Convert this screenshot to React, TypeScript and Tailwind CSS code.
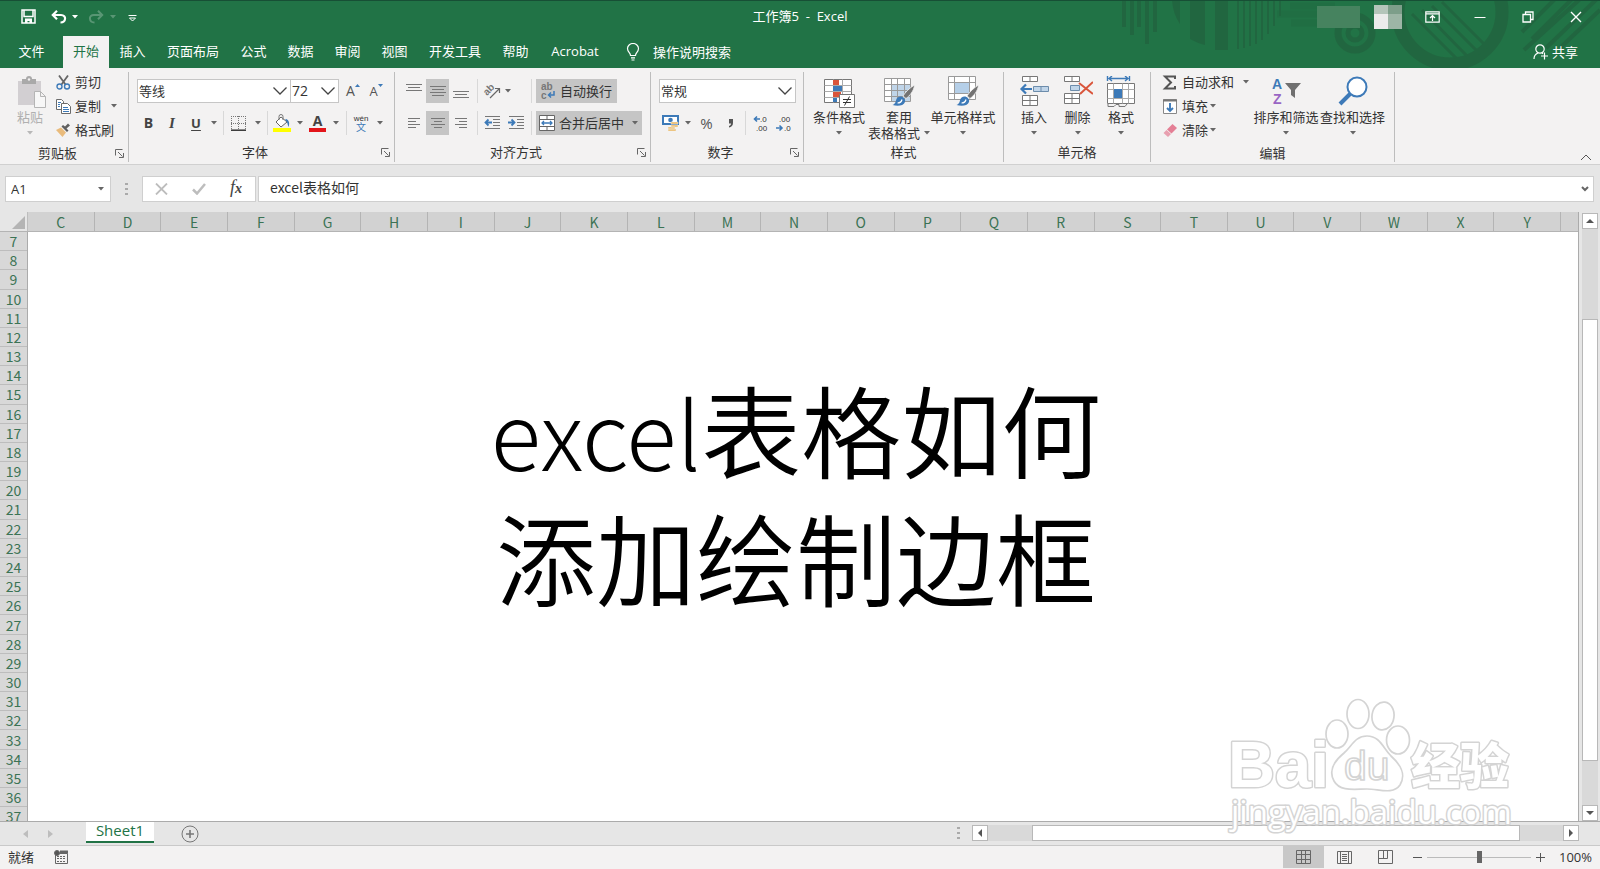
import type { ReactNode } from "react"

const tabs = [
  { name: "插入", width: "w-[47px]" },
  { name: "页面布局", width: "w-[74px]" },
  { name: "公式", width: "w-[47px]" },
  { name: "数据", width: "w-[47px]" },
  { name: "审阅", width: "w-[47px]" },
  { name: "视图", width: "w-[47px]" },
  { name: "开发工具", width: "w-[74px]" },
  { name: "帮助", width: "w-[47px]" },
  { name: "Acrobat", width: "w-[72px]" },
]

const columns = "CDEFGHIJKLMNOPQRSTUVWXY".split("")
const rows = Array.from({ length: 30 }, (_, i) => i + 7)

function Caret({ className = "text-[#666]" }: { className?: string }) {
  return (
    <svg width="6" height="4" viewBox="0 0 6 4" className={`shrink-0 ${className}`} fill="currentColor">
      <path d="M0 0h6L3 3.4z" />
    </svg>
  )
}

function Chevron() {
  return (
    <svg width="16" height="10" viewBox="0 0 16 10" className="pointer-events-none mr-[2px] shrink-0" fill="none" stroke="#444" strokeWidth="1.3">
      <path d="M1.5 1.5 8 8l6.500-6.500" />
    </svg>
  )
}

function Divider() {
  return <span className="h-6 w-px shrink-0 bg-[#d8d8d8]" />
}

interface IconButtonProps {
  label: string
  width: string
  active?: boolean
  children: ReactNode
}

function IconButton({ label, width, active, children }: IconButtonProps) {
  return (
    <button aria-label={label} className={`flex h-6 shrink-0 items-center justify-center ${width} ${active ? "bg-[#c5c5c5]" : ""}`}>
      {children}
    </button>
  )
}

interface GroupProps {
  label: string
  width: string
  launcher?: boolean
  children: ReactNode
}

function Group({ label, width, launcher, children }: GroupProps) {
  return (
    <section aria-label={label} className={`flex h-[90px] shrink-0 flex-col border-r border-[#bdbdbd] ${width}`}>
      <div className="h-[74px]">{children}</div>
      <div className="flex h-5 items-center">
        <span className="flex-1 text-center">{label}</span>
        {launcher && (
          <button aria-label={`${label}设置`} className="w-[13px]">
            <svg width="9" height="9" viewBox="0 0 9 9" fill="none" stroke="#666">
              <path d="M.5 6.500V.5h7M3 3l4.500 4.500M8.500 4v4.500H4" />
            </svg>
          </button>
        )}
      </div>
    </section>
  )
}

interface BigButtonProps {
  label: string
  second?: string
  width: string
  disabled?: boolean
  children: ReactNode
}

function BigButton({ label, second, width, disabled, children }: BigButtonProps) {
  return (
    <button disabled={disabled} className={`flex shrink-0 flex-col items-center pt-1 whitespace-nowrap disabled:text-[#b0b0b0] ${width}`}>
      {children}
      <span className="leading-[18px]">{label}</span>
      <span className="flex h-[14px] items-center gap-1 leading-[14px]">
        {second}
        <Caret className={disabled ? "text-[#b8b8b8]" : "text-[#666]"} />
      </span>
    </button>
  )
}

function SmallButton({ label, caret, children }: { label: string; caret?: string; children: ReactNode }) {
  return (
    <button className="flex h-6 items-center gap-1 pb-1 whitespace-nowrap">
      {children}
      <span>{label}</span>
      {caret && <span className={caret}><Caret /></span>}
    </button>
  )
}

function Lines({ d }: { d: string }) {
  return (
    <svg width="16" height="16" viewBox="0 0 16 16" fill="none" stroke="#777" shapeRendering="crispEdges">
      <path d={d} />
    </svg>
  )
}

function Brush() {
  return (
    <g>
      <path d="M31.500 9c-5 3-9 7-11.500 11l3 2.500C26.500 20 31 15 31.500 9z" fill="#737373" stroke="#f3f2f2" strokeWidth=".8" />
      <path d="M18.500 20.500c-2.500-.5-5 1-5.500 4-.5 2.500-2 4-3.500 4.500 5 1.500 11 1 12.500-3 .7-2-.5-4.500-3.500-5.500z" fill="#3d7ab8" />
      <path d="M14.500 27c2 0 4-1.200 4.500-3.500" stroke="#fff" strokeWidth="1.200" fill="none" />
    </g>
  )
}

function TitleArt() {
  return (
    <svg width="480" height="68" viewBox="0 0 480 68" className="pointer-events-none absolute top-0 right-0 opacity-80" fill="none" stroke="#21643f" aria-hidden="true">
      <path d="M4 0v27M12 0v35M19 0v27M27 0v44M35 0v32" strokeWidth="4" />
      <path d="M52 0h8v24Q53 14 52 0zM70 0h15v45q-8-2-15-6zM95 0h13v50H95z" fill="#21643f" stroke="none" />
      <path d="M118 0v49M124 0v48M130 0v46M136 0v44M142 0v40M148 0v34M154 0v26M160 0v16" strokeWidth="2" />
      <path d="M157 14h60M170 6h45M171 23h46" strokeWidth="7" opacity=".4" />
      <circle cx="235" cy="33" r="17" strokeWidth="7" />
      <circle cx="235" cy="33" r="7" strokeWidth="5" />
      <circle cx="330" cy="12" r="52" strokeWidth="13" />
      <path d="m292 14 44 44M302 10l45 46M312 6l48 48M322 2l46 46" strokeWidth="3" />
      <path d="m402 32 38-38M412 39l48-48M404 50l66-60M426 48l54-52M440 48l40-38" strokeWidth="4" />
    </svg>
  )
}

function TitleBar() {
  return (
    <div className="relative grid h-9 grid-cols-[1fr_auto_1fr] items-center border-t border-[#174f35] pb-1">
      <div className="flex items-center pl-[21px]">
        <button aria-label="保存" className="w-[30px]">
          <svg width="15" height="15" viewBox="0 0 15 15" fill="none" stroke="#fff" strokeWidth="1.500">
            <path d="M1 1h13v13H1zM3 1.500v6h9v-6" />
            <path d="M4 9.500h7V14H8.500v-2h-2v2H4z" fill="#fff" stroke="none" />
          </svg>
        </button>
        <button aria-label="撤消" className="flex w-[37px] items-center gap-[5px]">
          <svg width="16" height="14" viewBox="0 0 16 14" fill="none" stroke="#fff" strokeWidth="2.200">
            <path d="M2 5h8c6 0 5 7.500-.5 7.500M6 .8 1.800 5 6 9.200" />
          </svg>
          <Caret className="text-white" />
        </button>
        <button aria-label="恢复" disabled className="flex w-10 items-center gap-[6px] opacity-25">
          <svg width="16" height="14" viewBox="0 0 16 14" fill="none" stroke="#fff" strokeWidth="2">
            <path d="M14 5H6C0 5 1 12.500 6.500 12.500M10 .8 14.200 5 10 9.200" />
          </svg>
          <Caret className="text-white" />
        </button>
        <button aria-label="自定义快速访问工具栏" className="pt-[3px]">
          <svg width="9" height="7" viewBox="0 0 9 7" fill="none" stroke="#fff">
            <path d="M.5.5h8M1.500 3h6l-3 3z" />
          </svg>
        </button>
      </div>
      <h1 className="pb-[2px] whitespace-pre text-white">工作簿5  -  Excel</h1>
      <div className="flex items-center justify-end text-white">
        <span className="h-[22px] w-[43px] bg-[#46835f]" />
        <span className="mr-[6px] ml-[14px] grid h-6 w-7 grid-cols-2 grid-rows-[9px_15px]">
          <span className="bg-[#b4c5ba]" />
          <span className="bg-[#7d9e8a]" />
          <span className="bg-[#ebebeb]" />
          <span className="bg-[#9db5a6]" />
        </span>
        <button aria-label="功能区显示选项" className="flex w-12 justify-center">
          <svg width="15" height="12" viewBox="0 0 15 12" fill="none" stroke="currentColor" strokeWidth="1.200">
            <path d="M.8.8h13.400v10.400H.8zM.8 2.800h13.400M7.500 10V5M5 7l2.500-2.500L10 7" />
          </svg>
        </button>
        <button aria-label="最小化" className="flex w-12 justify-center">
          <svg width="12" height="12" viewBox="0 0 12 12" stroke="currentColor">
            <path d="M.5 6.500h11" />
          </svg>
        </button>
        <button aria-label="向下还原" className="flex w-12 justify-center">
          <svg width="12" height="12" viewBox="0 0 12 12" fill="none" stroke="currentColor" strokeWidth="1.300">
            <path d="M1 3.500h7.500V11H1zM3.500 3.500V1H11v7.500H8.500" />
          </svg>
        </button>
        <button aria-label="关闭" className="flex w-12 justify-center">
          <svg width="12" height="12" viewBox="0 0 12 12" stroke="currentColor" strokeWidth="1.400">
            <path d="m1 1 10 10M11 1 1 11" />
          </svg>
        </button>
      </div>
    </div>
  )
}

function TabBar() {
  return (
    <nav className="relative flex h-8 items-stretch text-white">
      <button className="w-[63px] pb-[2px]">文件</button>
      <button className="w-[46px] bg-[#f3f2f2] pb-[2px] text-[#217346]">开始</button>
      {tabs.map((tab) => (
        <button key={tab.name} className={`pb-[2px] ${tab.width}`}>{tab.name}</button>
      ))}
      <button className="ml-[15px] flex items-center gap-[13px]">
        <svg width="14" height="18" viewBox="0 0 14 18" fill="none" stroke="#fff" strokeWidth="1.200">
          <path d="M4.500 12.500c0-3-3-3.500-3-7a5.500 5 0 0 1 11 0c0 3.500-3 4-3 7zM5 14.800h4M5.500 17h3" />
        </svg>
        操作说明搜索
      </button>
      <button className="mr-[22px] ml-auto flex items-center gap-1">
        <svg width="15" height="16" viewBox="0 0 15 16" fill="none" stroke="#fff" strokeWidth="1.200">
          <circle cx="7" cy="5" r="4.200" />
          <path d="M1 15c0-3 1.500-5 4-6M9 9l1 .8M11.500 8.500v7M8 12h7" />
        </svg>
        共享
      </button>
    </nav>
  )
}

function ClipboardGroup() {
  return (
    <Group label="剪贴板" width="w-[129px]" launcher>
      <div className="flex">
        <BigButton label="粘贴" width="w-[56px] pl-1" disabled>
          <svg width="32" height="32" viewBox="0 0 32 32">
            <path d="M4 5h23v24H4z" fill="#d2cfd2" />
            <path d="M8 3h4a3 3 0 0 1 6 0h4v5H8z" fill="#a9a9a9" />
            <circle cx="15" cy="3.500" r="1.200" fill="#f3f2f2" />
            <path d="M20.500 15.500h6l5 5v11h-11zM26.500 15.500v5h5" fill="#f7f7f7" stroke="#b5b5b5" />
          </svg>
        </BigButton>
        <div className="flex flex-col">
          <SmallButton label="剪切">
            <svg width="15" height="15" viewBox="0 0 15 15" fill="none">
              <path d="m3 .5 6.500 9M12 .5 5.500 9.500" stroke="#666" strokeWidth="1.800" />
              <circle cx="3.500" cy="11.500" r="2.500" stroke="#3d7ab8" strokeWidth="1.400" />
              <circle cx="11" cy="11.500" r="2.500" stroke="#3d7ab8" strokeWidth="1.400" />
            </svg>
          </SmallButton>
          <SmallButton label="复制" caret="ml-[6px]">
            <svg width="15" height="15" viewBox="0 0 15 15" fill="#fff" stroke="#6b6b6b">
              <path d="M.5.5h5l2 2v8h-7z" />
              <path d="M5.500 4.500h6l3 3v7h-9z" />
              <path d="M2 3.500h3M2 5.500h2M2 7.500h2M7 8.500h5M7 10.500h6M7 12.500h6" stroke="#3d7ab8" />
            </svg>
          </SmallButton>
          <SmallButton label="格式刷">
            <svg width="15" height="15" viewBox="0 0 15 15">
              <path d="m0 7 5-2.500 5 5L6.500 14z" fill="#e9bb7c" />
              <path d="m5.500 3.500 5.500 5.500 1.500-1.500-2-2L14 2.500 12 .5l-3 3-2-1.500z" fill="#5f5f5f" />
            </svg>
          </SmallButton>
        </div>
      </div>
    </Group>
  )
}

function FontGroup() {
  return (
    <Group label="字体" width="w-[266px]" launcher>
      <div className="flex flex-col gap-2 pt-[7px] pl-2">
        <div className="flex items-center">
          <label className="flex h-6 w-[154px] items-center border border-[#c6c6c6] bg-white">
            <select aria-label="字体" className="min-w-0 flex-1 appearance-none pl-px outline-none">
              <option>等线</option>
            </select>
            <Chevron />
          </label>
          <label className="flex h-6 w-[48px] items-center border border-l-0 border-[#c6c6c6] bg-white">
            <select aria-label="字号" className="min-w-0 flex-1 appearance-none pl-px text-[14px] outline-none">
              <option>72</option>
            </select>
            <Chevron />
          </label>
          <IconButton label="增大字号" width="ml-[2px] w-6">
            <span className="text-[14px] text-[#555]">A</span>
            <svg width="5" height="3" viewBox="0 0 5 3" className="mb-3"><path d="M0 3h5L2.500 0z" fill="#3d7ab8" /></svg>
          </IconButton>
          <IconButton label="减小字号" width="w-[22px]">
            <span className="text-[13px] text-[#555]">A</span>
            <svg width="5" height="3" viewBox="0 0 5 3" className="mb-3"><path d="M0 0h5L2.500 3z" fill="#3d7ab8" /></svg>
          </IconButton>
        </div>
        <div className="flex items-center text-[#444]">
          <IconButton label="加粗" width="w-[23px]"><b className="text-[14px]">B</b></IconButton>
          <IconButton label="倾斜" width="w-6"><b className="font-[Liberation_Serif] text-[15px] italic">I</b></IconButton>
          <IconButton label="下划线" width="w-6"><b className="underline underline-offset-2">U</b></IconButton>
          <IconButton label="下划线样式" width="w-[11px]"><Caret /></IconButton>
          <span className="w-1" />
          <Divider />
          <IconButton label="边框" width="w-7">
            <svg width="15" height="15" viewBox="0 0 15 15" stroke="#777">
              <path d="M0 .5h15M0 7.500h15M.5 0v14M7.500 0v14M14.500 0v14" strokeDasharray="1 1" />
              <path d="M0 14.200h15" stroke="#333" strokeWidth="1.500" />
            </svg>
          </IconButton>
          <IconButton label="边框样式" width="w-[11px]"><Caret /></IconButton>
          <span className="w-1" />
          <Divider />
          <IconButton label="填充颜色" width="w-[27px]">
            <svg width="18" height="18" viewBox="0 0 18 18">
              <path d="m8 3 6 5-6 5-5-5z" fill="#fff" stroke="#666" />
              <path d="M6 6V2.500a2 2 0 0 1 4 0V6" fill="none" stroke="#777" />
              <path d="M13 5c3 1 4 4 2.500 8C14.500 11 15 8 12 6z" fill="#3d7ab8" />
              <path d="M0 14h18v4H0z" fill="#ff0" />
            </svg>
          </IconButton>
          <IconButton label="填充颜色选项" width="w-[9px]"><Caret /></IconButton>
          <IconButton label="字体颜色" width="w-[27px]">
            <span className="flex flex-col items-center">
              <b className="text-[14px] leading-[14px]">A</b>
              <span className="h-1 w-[17px] bg-[#e3151a]" />
            </span>
          </IconButton>
          <IconButton label="字体颜色选项" width="w-[9px]"><Caret /></IconButton>
          <span className="w-[6px]" />
          <Divider />
          <IconButton label="拼音" width="w-7">
            <svg width="18" height="20" viewBox="0 0 18 20" textAnchor="middle">
              <text x="9" y="8" fontSize="8" fontFamily="Liberation Sans" fill="#333">wén</text>
              <text x="9" y="18" fontSize="10" fontFamily="Noto Sans CJK SC" fill="#3d7ab8">文</text>
            </svg>
          </IconButton>
          <IconButton label="拼音选项" width="w-[9px]"><Caret /></IconButton>
        </div>
      </div>
    </Group>
  )
}

function AlignGroup() {
  return (
    <Group label="对齐方式" width="w-[256px]" launcher>
      <div className="flex flex-col gap-2 pt-[7px] pl-[7px]">
        <div className="flex items-center">
          <IconButton label="顶端对齐" width="w-6"><Lines d="M0 1.500h16M2 4.500h12M0 7.500h16" /></IconButton>
          <IconButton label="垂直居中" width="w-[23px]" active><Lines d="M0 3.500h16M2 6.500h12M0 9.500h16M2 12.500h12" /></IconButton>
          <IconButton label="底端对齐" width="w-6"><Lines d="M0 8.500h16M2 11.500h12M0 14.500h16" /></IconButton>
          <span className="w-1" />
          <Divider />
          <IconButton label="方向" width="w-[27px]">
            <svg width="18" height="18" viewBox="0 0 18 18">
              <text x="1" y="11" fontSize="10" fontFamily="Liberation Sans" fontWeight="700" fill="#777" transform="rotate(-45 6 9)">ab</text>
              <path d="m7 16 9-9M12 6.500h4.500V11" fill="none" stroke="#666" strokeWidth="1.200" />
            </svg>
          </IconButton>
          <IconButton label="方向选项" width="w-[6px]"><Caret /></IconButton>
          <span className="w-5" />
          <Divider />
          <button className="ml-1 flex h-6 w-[81px] items-center gap-1 bg-[#c5c5c5] pl-1 whitespace-nowrap">
            <svg width="16" height="24" viewBox="0 0 16 24" fontFamily="Liberation Sans" fontSize="10" fontWeight="700" fill="#777">
              <text x="1" y="11">ab</text>
              <text x="1" y="20">c</text>
              <path d="M14 12v4H9M11 13.500 8.500 16l2.500 2.500" fill="none" stroke="#3d7ab8" strokeWidth="1.500" />
            </svg>
            自动换行
          </button>
        </div>
        <div className="flex items-center">
          <IconButton label="左对齐" width="w-6"><Lines d="M2 3.500h12M2 6.500h8M2 9.500h12M2 12.500h8" /></IconButton>
          <IconButton label="居中" width="w-[23px]" active><Lines d="M1 3.500h14M4 6.500h8M1 9.500h14M4 12.500h8" /></IconButton>
          <IconButton label="右对齐" width="w-6"><Lines d="M2 3.500h12M6 6.500h8M2 9.500h12M6 12.500h8" /></IconButton>
          <span className="w-1" />
          <Divider />
          <IconButton label="减少缩进量" width="w-[27px]">
            <svg width="16" height="14" viewBox="0 0 16 14" fill="none" stroke="#777">
              <path d="M1 .5h15M9 3.500h7M9 6.500h7M9 9.500h7M1 12.500h15" />
              <path d="M8 6.500H2M4.500 3.500l-3 3 3 3" stroke="#3d7ab8" strokeWidth="1.800" />
            </svg>
          </IconButton>
          <IconButton label="增加缩进量" width="w-[21px]">
            <svg width="16" height="14" viewBox="0 0 16 14" fill="none" stroke="#777">
              <path d="M1 .5h15M9 3.500h7M9 6.500h7M9 9.500h7M1 12.500h15" />
              <path d="M0 6.500h6M3.500 3.500l3 3-3 3" stroke="#3d7ab8" strokeWidth="1.800" />
            </svg>
          </IconButton>
          <span className="w-[5px]" />
          <Divider />
          <button className="ml-1 flex h-6 w-[106px] items-center gap-1 bg-[#c5c5c5] pl-[3px] whitespace-nowrap">
            <svg width="16" height="16" viewBox="0 0 16 16" fill="none" stroke="#666">
              <path d="M.5.5h15v15H.5z" fill="#fff" />
              <path d="M.5 4.500h15M.5 11.500h15M8 .5v4M8 11.500v4" />
              <path d="M3 8h10M5 6 3 8l2 2M11 6l2 2-2 2" stroke="#3d7ab8" strokeWidth="1.300" />
            </svg>
            合并后居中
            <span className="ml-1"><Caret /></span>
          </button>
        </div>
      </div>
    </Group>
  )
}

function NumberGroup() {
  return (
    <Group label="数字" width="w-[153px]" launcher>
      <div className="flex flex-col gap-2 pt-[7px] pl-2">
        <label className="flex h-6 w-[137px] items-center border border-[#c6c6c6] bg-white">
          <select aria-label="数字格式" className="min-w-0 flex-1 appearance-none pl-px outline-none">
            <option>常规</option>
          </select>
          <Chevron />
        </label>
        <div className="flex items-center text-[#555]">
          <IconButton label="会计数字格式" width="w-[23px]">
            <svg width="17" height="16" viewBox="0 0 17 16">
              <path d="M1 1h15v8H1z" fill="#fff" stroke="#3d7ab8" strokeWidth="2" />
              <circle cx="8.500" cy="5" r="2.300" fill="#3d7ab8" />
              <path d="M9 7h7v2H9zM9 10h7v2H9zM6 12h7v2H6zM6 14h8v2H6z" fill="#ecb65c" stroke="#f3f2f2" strokeWidth=".5" />
            </svg>
          </IconButton>
          <IconButton label="会计格式选项" width="w-3"><Caret /></IconButton>
          <IconButton label="百分比样式" width="w-[25px]"><span className="text-[15px]">%</span></IconButton>
          <IconButton label="千位分隔样式" width="w-[23px]">
            <svg width="6" height="9" viewBox="0 0 6 9"><path d="M1 0h4v4c0 2.500-1.500 4-4 4.500V7c1.500-.5 2-1.500 2-2.500H1z" fill="#555" /></svg>
          </IconButton>
          <span className="w-[3px]" />
          <Divider />
          <IconButton label="增加小数位数" width="w-[29px]">
            <svg width="16" height="20" viewBox="0 0 16 20" fontFamily="Liberation Sans" fontSize="8" fill="#333">
              <path d="M7 6H1.500M4 3.500 1.500 6 4 8.500" fill="none" stroke="#3d7ab8" strokeWidth="1.600" />
              <text x="7" y="9">.0</text>
              <text x="3" y="18">.00</text>
            </svg>
          </IconButton>
          <IconButton label="减少小数位数" width="w-[18px]">
            <svg width="16" height="20" viewBox="0 0 16 20" fontFamily="Liberation Sans" fontSize="8" fill="#333">
              <text x="3" y="9">.00</text>
              <path d="M0 15h6M3.500 12.500 6 15l-2.500 2.500" fill="none" stroke="#3d7ab8" strokeWidth="1.600" />
              <text x="8" y="18">.0</text>
            </svg>
          </IconButton>
        </div>
      </div>
    </Group>
  )
}

function StylesGroup() {
  return (
    <Group label="样式" width="w-[200px]">
      <div className="flex pl-[6px]">
        <BigButton label="条件格式" width="w-[58px]">
          <svg width="32" height="32" viewBox="0 0 32 32" fill="none">
            <path d="M1.500 3.500h27v23h-27z" fill="#fff" stroke="#777" />
            <path d="M1.500 9.500h27M1.500 15.500h27M1.500 21.500h27M10.500 3.500v23M19.500 3.500v23" stroke="#aaa" />
            <path d="M10 4h6v5h-6zM10 16h8v5h-8z" fill="#d9553b" />
            <path d="M10 10h9v5h-9zM10 22h4v4h-4z" fill="#3d7ab8" />
            <path d="M16.500 18.500h15v13h-15z" fill="#fff" stroke="#777" />
            <path d="M20 23.500h8M20 26.500h8M26.500 20.500l-5 9" stroke="#333" />
          </svg>
        </BigButton>
        <BigButton label="套用" second="表格格式" width="w-[62px]">
          <svg width="32" height="32" viewBox="0 0 32 32" fill="none">
            <path d="M1.500 2.500h26v23h-26z" fill="#fff" />
            <path d="M8 8h19v17H8z" fill="#c0d5e9" />
            <path d="M1.500 2.500h26v23h-26zM1.500 8.500h26M1.500 14.500h26M1.500 20.500h26M8.500 2.500v23M14.500 2.500v23M21.500 2.500v23" stroke="#9a9a9a" />
            <Brush />
          </svg>
        </BigButton>
        <BigButton label="单元格样式" width="w-[66px]">
          <svg width="32" height="32" viewBox="0 0 32 32" fill="none">
            <path d="M1.500.5h27v23h-27z" fill="#fff" />
            <path d="M1.500.5h27v23h-27zM1.500 6.500h27M1.500 17.500h27M7.500.5v23M22.500.5v23" stroke="#9a9a9a" />
            <path d="M8 7h14v10H8z" fill="#b5cfe8" />
            <Brush />
          </svg>
        </BigButton>
      </div>
    </Group>
  )
}

function CellsGroup() {
  return (
    <Group label="单元格" width="w-[147px]">
      <div className="flex pl-2">
        <BigButton label="插入" width="w-[44px]">
          <svg width="30" height="32" viewBox="0 0 30 32" fill="none">
            <path d="M3.500.5h15v5h-15zM11 .5v5M3.500 19.500h15v10h-15zM3.500 24.500h15M11 19.500v10" fill="#fff" stroke="#777" />
            <path d="M14.500 10.500h15v5h-15zM22 10.500v5" fill="#c0d5e9" stroke="#6c8cab" />
            <path d="M13 13H3M7 8.500 2.500 13 7 17.500" stroke="#3d7ab8" strokeWidth="2.200" />
          </svg>
        </BigButton>
        <BigButton label="删除" width="w-[43px]">
          <svg width="30" height="32" viewBox="0 0 30 32" fill="none">
            <path d="M1.500.5h15v5h-15zM9 .5v5M1.500 17.500h15v10h-15zM1.500 22.500h15M9 17.500v10" fill="#fff" stroke="#777" />
            <path d="M7.500 9.500h9v5h-9z" fill="#c0d5e9" stroke="#6c8cab" />
            <path d="m16 7 14 11M30 6 17 18" stroke="#d9553b" strokeWidth="2" />
          </svg>
        </BigButton>
        <BigButton label="格式" width="w-[44px]">
          <svg width="30" height="32" viewBox="0 0 30 32" fill="none">
            <path d="M1.500 0v5M23.500 0v5M3 2.500h19M6 0 3 2.500 6 5M19 0l3 2.500L19 5" stroke="#3d7ab8" strokeWidth="1.400" />
            <path d="M1.500 7.500h27v20h-27z" fill="#fff" stroke="#777" />
            <path d="M1.500 13.500h27M1.500 22.500h27M7.500 7.500v20M16.500 7.500v20M22.500 7.500v20" stroke="#aaa" />
            <path d="M8 13h8v9H8z" fill="#3d7ab8" />
            <path d="M2 28v2.500h6l2-2h3v2h6l2-2.500" stroke="#777" />
          </svg>
        </BigButton>
      </div>
    </Group>
  )
}

function EditGroup() {
  return (
    <Group label="编辑" width="w-[244px]">
      <div className="flex pl-[11px]">
        <div className="flex w-[91px] flex-col">
          <SmallButton label="自动求和" caret="ml-[5px]">
            <svg width="16" height="15" viewBox="0 0 16 15" fill="none" stroke="#555" strokeWidth="2">
              <path d="M13 4V1.500H3L9 7.500 3 13.500h10V11" />
            </svg>
          </SmallButton>
          <SmallButton label="填充" caret="-ml-[2px]">
            <svg width="16" height="15" viewBox="0 0 16 15" fill="none">
              <path d="M1.500.5h13v14h-13z" fill="#fff" stroke="#888" />
              <path d="M1 1.500h14" stroke="#777" strokeWidth="2" />
              <path d="M8 4v8M5 9l3 3 3-3" stroke="#3d7ab8" strokeWidth="1.900" />
            </svg>
          </SmallButton>
          <SmallButton label="清除" caret="-ml-[2px]">
            <svg width="16" height="15" viewBox="0 0 16 15">
              <path d="M10.500 1 15 5l-5.500 5.500L5 6.500z" fill="#e47f95" />
              <path d="m4.500 7 4.500 4L6 14 1.500 10z" fill="#e8a0b0" />
            </svg>
          </SmallButton>
        </div>
        <BigButton label="排序和筛选" width="w-[66px]">
          <svg width="32" height="32" viewBox="0 0 32 32" fontFamily="Liberation Sans" fontSize="14" fontWeight="700">
            <text x="2" y="13" fill="#3d7ab8">A</text>
            <text x="3" y="28" fill="#9966c4">Z</text>
            <path d="M15 7h16l-6 7v8l-4-3v-5z" fill="#707070" />
          </svg>
        </BigButton>
        <BigButton label="查找和选择" width="w-[67px]">
          <svg width="32" height="32" viewBox="0 0 32 32" fill="none" stroke="#3d7ab8">
            <circle cx="20" cy="11" r="9.500" strokeWidth="2" fill="#fff" />
            <path d="m13 18-10 10" strokeWidth="4" />
          </svg>
        </BigButton>
      </div>
    </Group>
  )
}

function FormulaBar() {
  return (
    <div className="flex h-[47px] items-start bg-[#e6e6e6] pt-[11px] pr-[6px] pl-[5px]">
      <label className="flex h-[26px] w-[106px] items-center border border-[#cfcfcf] bg-white">
        <input aria-label="名称框" defaultValue="A1" className="min-w-0 flex-1 pl-[5px] outline-none" />
        <span className="mr-[6px]"><Caret /></span>
      </label>
      <svg width="31" height="26" viewBox="0 0 31 26" fill="#aaa">
        <path d="M14 7h3v2h-3zM14 12h3v2h-3zM14 17h3v2h-3z" />
      </svg>
      <div className="flex h-[26px] w-[114px] items-center border border-[#cfcfcf] bg-white">
        <button aria-label="取消" className="flex w-9 justify-center">
          <svg width="13" height="12" viewBox="0 0 13 12" stroke="#bdbdbd" strokeWidth="1.800"><path d="m1 .5 11 11M12 .5l-11 11" /></svg>
        </button>
        <button aria-label="输入" className="flex w-10 justify-center">
          <svg width="14" height="12" viewBox="0 0 14 12" fill="none" stroke="#bdbdbd" strokeWidth="2.500"><path d="m1 6.500 4 4L13 1" /></svg>
        </button>
        <button aria-label="插入函数" className="w-[34px] pb-[2px] text-center font-[Liberation_Serif] text-[18px] leading-6 text-[#444] italic">
          f<span className="text-[14px] font-bold">x</span>
        </button>
      </div>
      <div className="ml-[2px] flex h-[26px] flex-1 items-center border border-[#cfcfcf] bg-white">
        <input aria-label="编辑栏" defaultValue="excel表格如何" className="min-w-0 flex-1 pb-1 pl-[11px] font-['Noto_Sans_CJK_SC'] text-[14px] outline-none" />
        <button aria-label="展开编辑栏" className="mr-1">
          <svg width="8" height="6" viewBox="0 0 8 6" fill="none" stroke="#666" strokeWidth="2"><path d="m1 1 3 3 3-3" /></svg>
        </button>
      </div>
    </div>
  )
}

function ScrollButton({ label, d }: { label: string; d: string }) {
  return (
    <button aria-label={label} className="flex size-4 shrink-0 items-center justify-center border border-[#b8b8b8] bg-white">
      <svg width="8" height="8" viewBox="0 0 8 8" fill="#555"><path d={d} /></svg>
    </button>
  )
}

function Sheet() {
  return (
    <div className="flex min-h-0 flex-1 bg-[#e6e6e6]">
      <div className="flex min-w-0 flex-1 flex-col border-r border-[#ababab]">
        <div className="flex h-5 shrink-0 border-b border-[#b4b4b4] bg-[#d2d2d2] font-['Noto_Sans_CJK_SC'] text-[14px] leading-5 text-[#3b7354]">
          <div className="flex w-7 items-end justify-end border-r border-[#bdbdbd] bg-[#e6e6e6] pr-[2px] pb-[2px]">
            <svg width="13" height="13" viewBox="0 0 13 13"><path d="M13 0v13H0z" fill="#b4b4b4" /></svg>
          </div>
          {columns.map((c) => (
            <div key={c} className="flex-1 border-r border-[#b4b4b4] text-center">{c}</div>
          ))}
          <div className="w-[17px]" />
        </div>
        <div className="flex min-h-0 flex-1">
          <div className="flex w-7 shrink-0 flex-col overflow-hidden border-r border-[#ababab] bg-[#d8d8d8] font-['Noto_Sans_CJK_SC'] text-[14px] text-[#3b7354]">
            {rows.map((r) => (
              <div key={r} className="flex min-h-0 flex-1 items-center justify-center border-b border-[#bdbdbd] leading-[18px]">{r}</div>
            ))}
            <div className="h-[14px] shrink-0 text-center leading-[18px]">37</div>
          </div>
          <div className="flex flex-1 items-center justify-center bg-white pr-[14px] pb-[70px]">
            <p className="text-center font-['Noto_Sans_CJK_SC',sans-serif] text-[100px] leading-[125px] font-[350] text-black">
              <span className="text-[93px] font-light">excel</span>表格如何
              <br />
              添加绘制边框
            </p>
          </div>
        </div>
      </div>
      <div className="flex w-[21px] shrink-0 flex-col items-center pt-px">
        <ScrollButton label="向上滚动" d="M0 6h8L4 2z" />
        <div className="flex w-4 flex-1 flex-col bg-[#d9d9d9]">
          <div className="flex-[90]" />
          <div className="flex-[443] border border-[#b8b8b8] bg-white" />
          <div className="flex-[44]" />
        </div>
        <ScrollButton label="向下滚动" d="M0 2h8L4 6z" />
      </div>
    </div>
  )
}

function SheetTabs() {
  return (
    <div className="flex h-6 items-center border-t border-[#ababab] bg-[#e6e6e6] pr-[21px]">
      <button aria-label="上一个工作表" className="flex w-[28px] justify-end">
        <svg width="5" height="8" viewBox="0 0 5 8"><path d="M5 0v8L0 4z" fill="#bdbdbd" /></svg>
      </button>
      <button aria-label="下一个工作表" className="flex w-[58px] pl-5">
        <svg width="5" height="8" viewBox="0 0 5 8"><path d="M0 0v8l5-4z" fill="#bdbdbd" /></svg>
      </button>
      <button className="h-full w-[68px] pb-[2px]">
        <span className="flex h-full items-center justify-center border-b-2 border-[#217346] bg-white pb-1 text-[15px] text-[#217346]">Sheet1</span>
      </button>
      <button aria-label="新工作表" className="ml-[27px]">
        <svg width="18" height="18" viewBox="0 0 18 18" fill="none" stroke="#777">
          <circle cx="9" cy="9" r="8" />
          <path d="M9 5v8M5 9h8" strokeWidth="1.600" />
        </svg>
      </button>
      <div className="ml-auto flex w-[622px] items-center pb-px">
        <svg width="3" height="12" viewBox="0 0 3 12" fill="#aaa"><path d="M0 0h3v2H0zM0 5h3v2H0zM0 10h3v2H0z" /></svg>
        <span className="w-3" />
        <ScrollButton label="向左滚动" d="M6 0v8L2 4z" />
        <div className="flex h-4 flex-1 bg-[#d9d9d9]">
          <div className="flex-[44]" />
          <div className="flex-[488] border border-[#b8b8b8] bg-white" />
          <div className="flex-[43]" />
        </div>
        <ScrollButton label="向右滚动" d="M2 0v8l4-4z" />
      </div>
    </div>
  )
}

function StatusBar() {
  return (
    <footer className="flex h-6 items-center border-t border-[#c9c9c9] bg-[#f3f2f2] pr-2 pb-px pl-2">
      <span className="pb-px">就绪</span>
      <button aria-label="录制宏" className="ml-5">
        <svg width="14" height="14" viewBox="0 0 14 14" fill="none" stroke="#666">
          <path d="M1.500 3.500h12v10h-12z" />
          <path d="M6 2h8" strokeWidth="3" />
          <path d="M3 6.500h9M3 8.500h9M3 11.500h9" strokeDasharray="2 1" />
          <circle cx="3" cy="3" r="2.500" fill="#555" />
        </svg>
      </button>
      <div className="ml-auto flex h-full items-center">
        <button aria-label="普通" className="flex h-full w-[41px] items-center justify-center bg-[#c8c8c8]">
          <svg width="15" height="14" viewBox="0 0 15 14" fill="none" stroke="#666"><path d="M.5.5h14v13H.5zM.5 4.500h14M.5 9.500h14M5.500.5v13M9.500.5v13" /></svg>
        </button>
        <button aria-label="页面布局视图" className="flex w-[41px] justify-center">
          <svg width="15" height="13" viewBox="0 0 15 13" fill="none" stroke="#666"><path d="M.5.5h14v12H.5zM3.500.5v12M11.500.5v12M5 3.500h5M5 5.500h5M5 7.500h5M5 9.500h5" /></svg>
        </button>
        <button aria-label="分页预览" className="flex w-[41px] justify-center">
          <svg width="15" height="14" viewBox="0 0 15 14" fill="none" stroke="#666"><path d="M.5.5h14v13H.5zM5.500.5v8M.5 8.500h9v-8" /></svg>
        </button>
        <button aria-label="缩小" className="ml-[7px]">
          <svg width="9" height="9" viewBox="0 0 9 9" stroke="#555"><path d="M0 4.500h9" /></svg>
        </button>
        <input
          type="range"
          aria-label="显示比例"
          min="0"
          max="100"
          defaultValue="50"
          className="mx-[5px] h-3 w-[104px] appearance-none bg-linear-to-r from-[#bbb] to-[#bbb] bg-[length:100%_1px] bg-center bg-no-repeat [&::-webkit-slider-thumb]:h-3 [&::-webkit-slider-thumb]:w-[5px] [&::-webkit-slider-thumb]:appearance-none [&::-webkit-slider-thumb]:bg-[#666]"
        />
        <button aria-label="放大">
          <svg width="9" height="9" viewBox="0 0 9 9" stroke="#555"><path d="M0 4.500h9M4.500 0v9" /></svg>
        </button>
        <button className="w-[47px] text-right">100%</button>
      </div>
    </footer>
  )
}

function Watermark() {
  return (
    <svg width="290" height="145" viewBox="0 0 290 145" className="pointer-events-none absolute right-[83px] bottom-[27px]" fill="#fff" stroke="#d4d4d4" strokeWidth="1.700" strokeLinejoin="round">
      <ellipse cx="110" cy="37" rx="11" ry="14" />
      <ellipse cx="131" cy="17" rx="11" ry="14.500" />
      <ellipse cx="156" cy="19" rx="11" ry="14" transform="rotate(8 156 19)" />
      <ellipse cx="171" cy="43" rx="11.500" ry="14" />
      <path d="M140 39c-12 0-15 10-23 17-11 9-15 19-10 28 6 11 21 8 33 8s26 6 33-4c6-10 2-19-9-29-8-8-11-20-24-20z" />
      <g fontFamily="Liberation Sans">
        <text x="1" y="90" fontSize="65" fontWeight="700" strokeWidth="3" paintOrder="stroke">Bai</text>
        <text x="117" y="83" fontSize="41">du</text>
      </g>
      <text x="184" y="87" fontSize="49" fontFamily="Noto Sans CJK SC" fontWeight="900" strokeWidth="3" paintOrder="stroke">经验</text>
      <text x="4" y="127" fontSize="33" fontFamily="Open Sans" strokeWidth="3" paintOrder="stroke">jingyan.baidu.com</text>
    </svg>
  )
}

export default function App() {
  return (
    <div className="relative flex h-screen flex-col overflow-hidden bg-[#e6e6e6] font-['Open_Sans','Noto_Sans_CJK_SC',sans-serif] text-[13px] leading-[18px] text-[#333]">
      <header className="relative bg-[#217346]">
        <TitleArt />
        <TitleBar />
        <TabBar />
      </header>
      <div className="flex h-[97px] shrink-0 border-b border-[#d0d0d0] bg-[#f3f2f2] pt-1">
        <ClipboardGroup />
        <FontGroup />
        <AlignGroup />
        <NumberGroup />
        <StylesGroup />
        <CellsGroup />
        <EditGroup />
        <button aria-label="折叠功能区" className="mr-2 mb-[3px] ml-auto self-end">
          <svg width="12" height="7" viewBox="0 0 12 7" fill="none" stroke="#555"><path d="m1 6 5-5 5 5" /></svg>
        </button>
      </div>
      <FormulaBar />
      <Sheet />
      <SheetTabs />
      <StatusBar />
      <Watermark />
    </div>
  )
}
